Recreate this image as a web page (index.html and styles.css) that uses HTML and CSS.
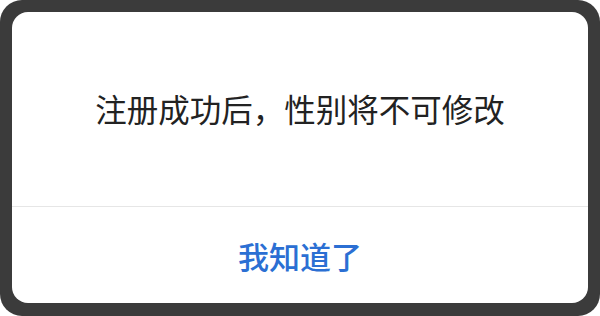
FILE: index.html
```html
<!DOCTYPE html>
<html lang="zh-CN">
<head>
<meta charset="utf-8">
<link rel="stylesheet" href="styles.css">
</head>
<body>
<div class="frame">
  <div class="dialog">
    <div class="message">注册成功后，性别将不可修改</div>
    <div class="action">我知道了</div>
  </div>
</div>
</body>
</html>
```
FILE: styles.css
```css
html, body {
  margin: 0;
  padding: 0;
  background: #ffffff;
}
.frame {
  width: 600px;
  height: 316px;
  box-sizing: border-box;
  background: #3b3b3b;
  border-radius: 22px;
  padding: 12px 12px 13px 12px;
  display: flex;
}
.dialog {
  flex: 1;
  background: #ffffff;
  border-radius: 16px;
  display: flex;
  flex-direction: column;
  font-family: "Noto Sans CJK SC", "Noto Sans", sans-serif;
}
.message {
  height: 195px;
  padding-bottom: 2px;
  display: flex;
  align-items: center;
  justify-content: center;
  font-size: 31.5px;
  color: #222222;
  border-bottom: 1px solid #e6e6e6;
  box-sizing: border-box;
}
.action {
  flex: 1;
  display: flex;
  align-items: center;
  justify-content: center;
  font-size: 31px;
  font-weight: 500;
  color: #2b6fd3;
}
```
